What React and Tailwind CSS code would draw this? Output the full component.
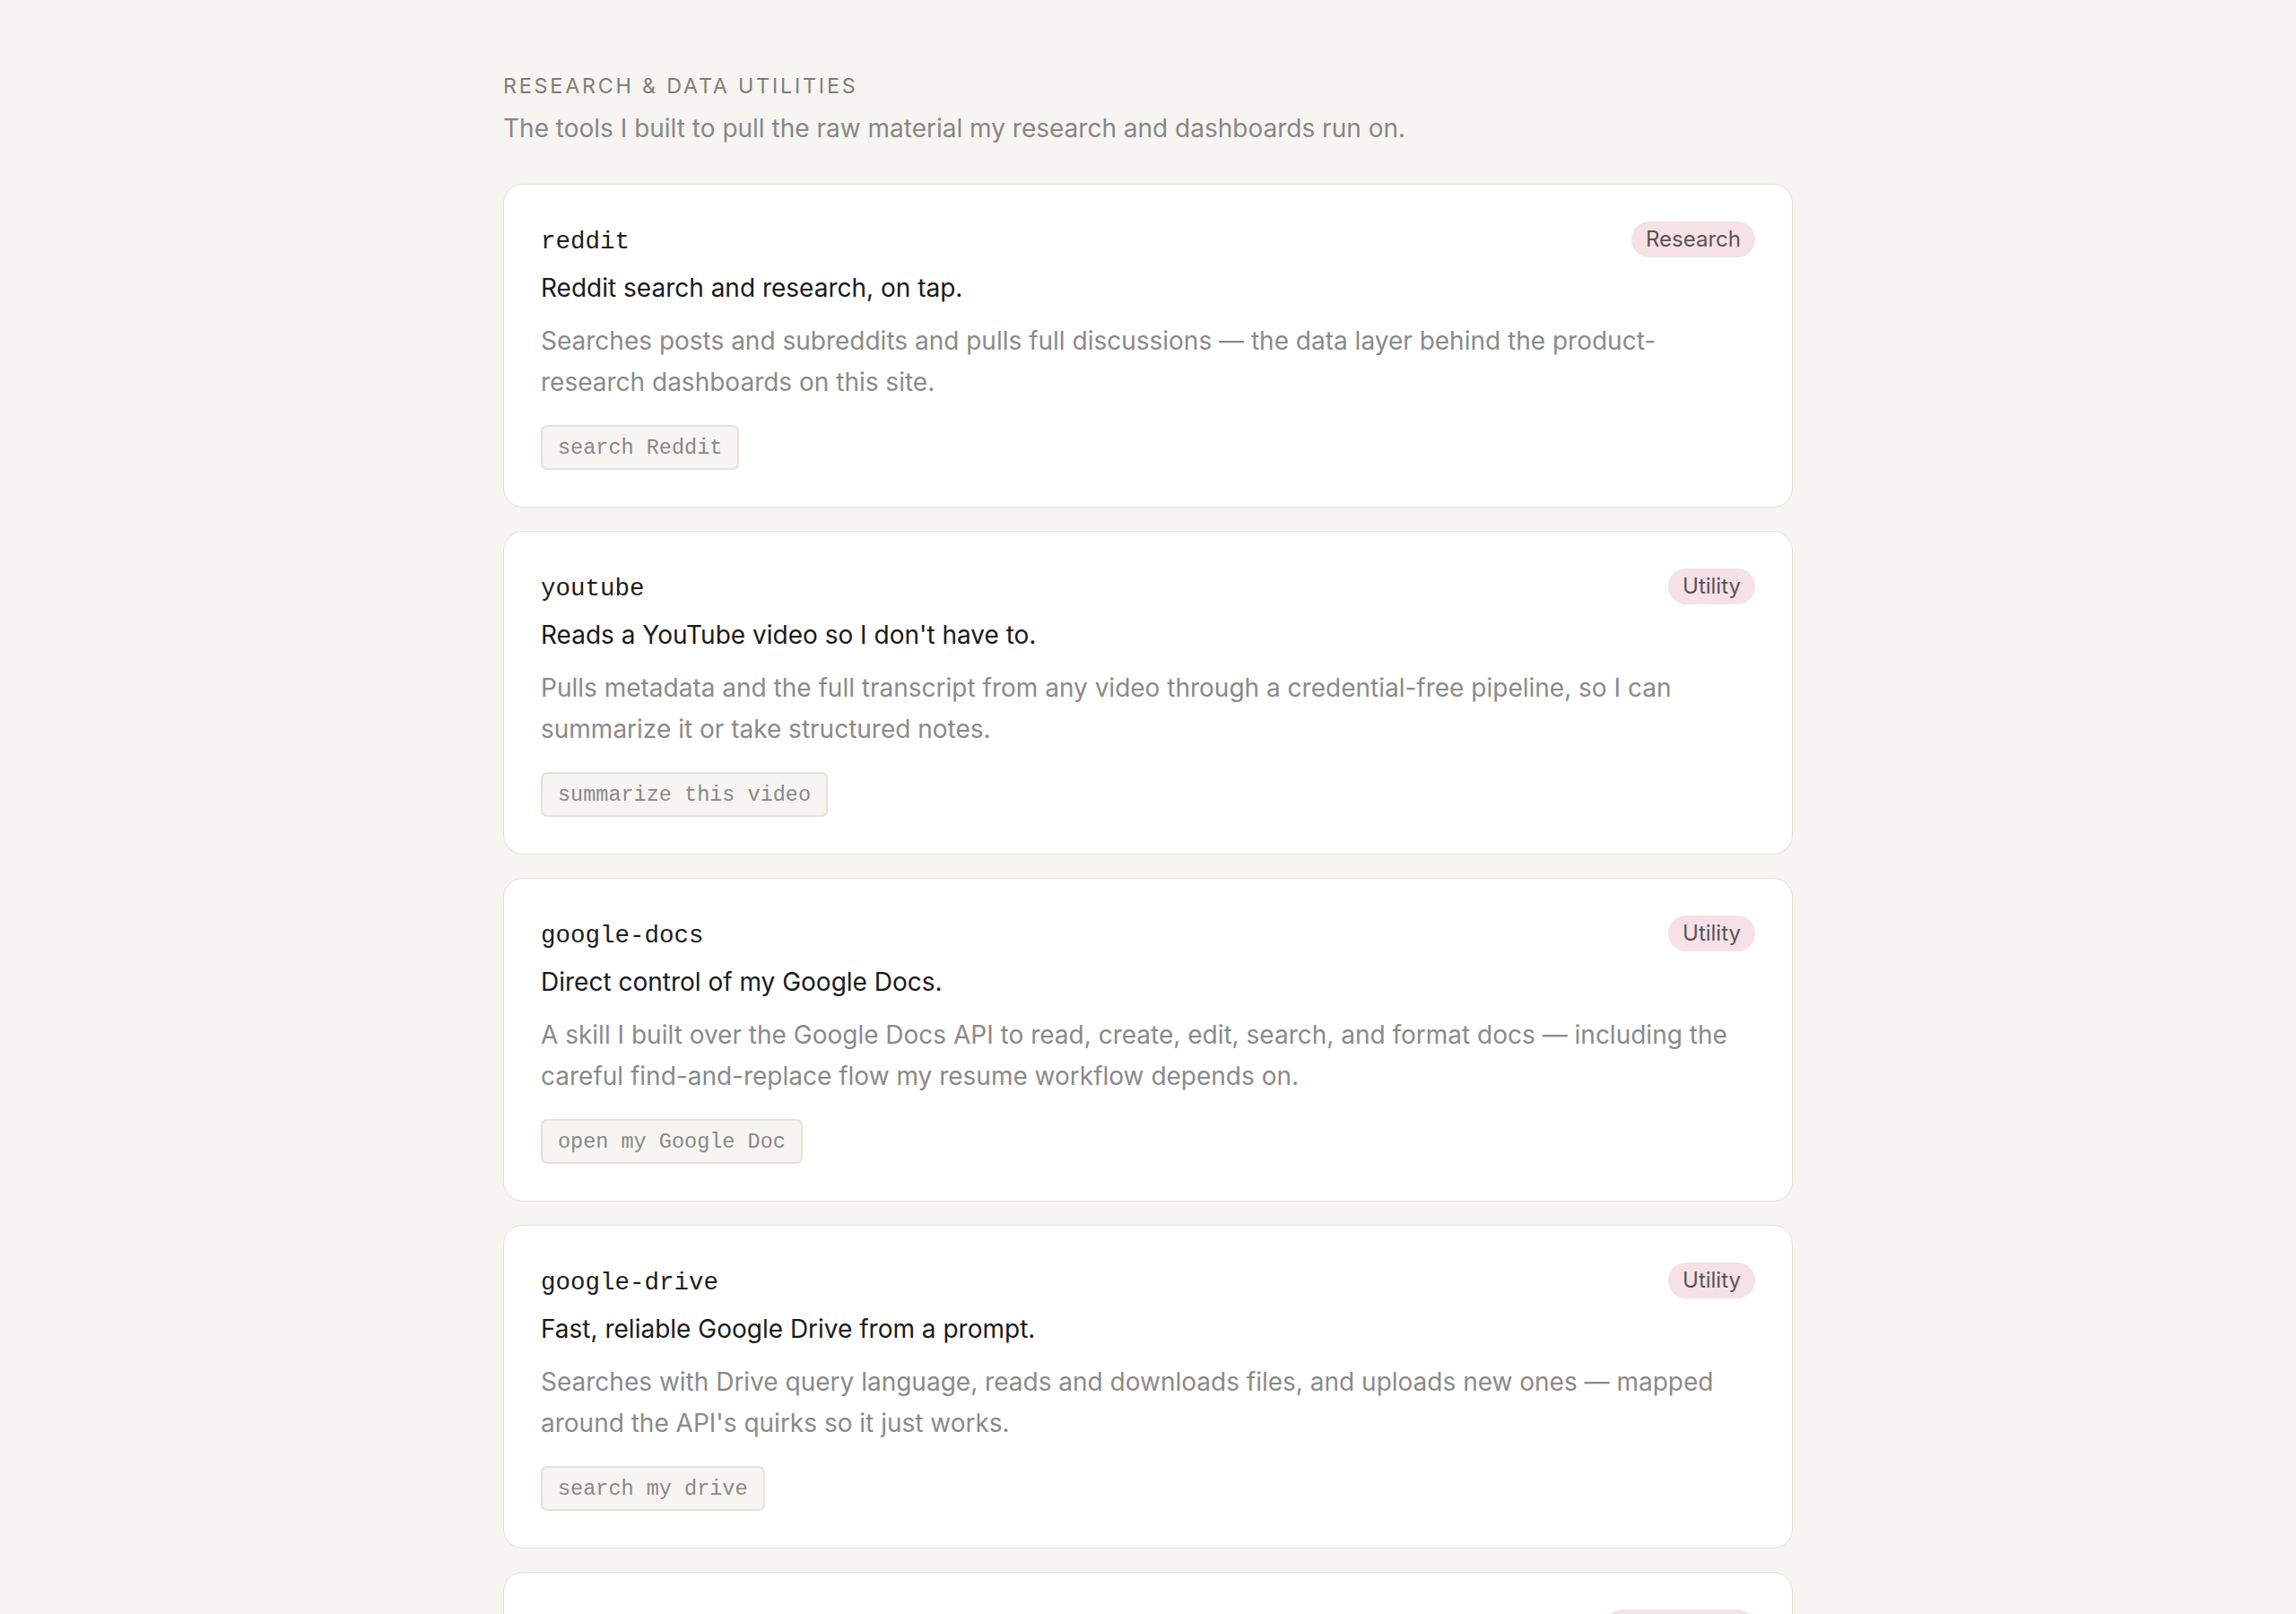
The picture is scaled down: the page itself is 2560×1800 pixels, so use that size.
import React from "react";

const tools = [
  {
    name: "reddit",
    tag: "Research",
    title: "Reddit search and research, on tap.",
    desc: "Searches posts and subreddits and pulls full discussions — the data layer behind the product-research dashboards on this site.",
    prompt: "search Reddit",
  },
  {
    name: "youtube",
    tag: "Utility",
    title: "Reads a YouTube video so I don't have to.",
    desc: "Pulls metadata and the full transcript from any video through a credential-free pipeline, so I can summarize it or take structured notes.",
    prompt: "summarize this video",
  },
  {
    name: "google-docs",
    tag: "Utility",
    title: "Direct control of my Google Docs.",
    desc: "A skill I built over the Google Docs API to read, create, edit, search, and format docs — including the careful find-and-replace flow my resume workflow depends on.",
    prompt: "open my Google Doc",
  },
  {
    name: "google-drive",
    tag: "Utility",
    title: "Fast, reliable Google Drive from a prompt.",
    desc: "Searches with Drive query language, reads and downloads files, and uploads new ones — mapped around the API's quirks so it just works.",
    prompt: "search my drive",
  },
  {
    name: "google-sheets",
    tag: "Dashboards",
    title: "Spreadsheets that fill themselves in.",
    desc: "Reads, writes, and formats ranges across my sheets so research output lands straight in the dashboards that use it.",
    prompt: "update my sheet",
  },
];

const mono = { fontFamily: '"Liberation Mono", "Courier New", monospace' };

const ToolCard = ({ tool }) => (
  <div className="bg-white border border-[#e4e0d7] rounded-[22px] px-[41px] pt-[41px] pb-[41px]">
    <div className="flex items-center justify-between h-[40px]">
      <span className="pt-[5px] text-[27.5px] leading-none text-[#1c1c1c]" style={mono}>
        {tool.name}
      </span>
      <span className="h-[40px] px-[16px] rounded-full bg-[#f5e1e6] text-[#5b5353] text-[24px] leading-[40px]">
        {tool.tag}
      </span>
    </div>
    <h3 className="mt-[14px] text-[28px] leading-[40px] text-[#1a1a1a]">{tool.title}</h3>
    <p className="mt-[16px] text-[28px] leading-[46px] text-[#8a8a8a]">{tool.desc}</p>
    <div className="mt-[25px]">
      <span
        className="inline-block h-[50px] px-[17px] leading-[48px] rounded-[7px] border-2 border-[#e6e1d8] bg-[#f6f5f1] text-[23.5px] text-[#888888]"
        style={mono}
      >
        {tool.prompt}
      </span>
    </div>
  </div>
);

export default function App() {
  return (
    <main
      className="min-h-screen bg-[#f6f5f1] overflow-hidden"
      style={{ fontFamily: 'Inter, "Noto Sans", sans-serif' }}
    >
      <div className="w-[1438px] mx-auto pt-[82px] h-[1800px]">
        <h2 className="text-[23.3px] leading-[28px] tracking-[0.12em] uppercase text-[#807d79]">
          Research &amp; Data Utilities
        </h2>
        <p className="mt-[15px] text-[28px] leading-[36px] text-[#878787]">
          The tools I built to pull the raw material my research and dashboards run on.
        </p>
        <div className="mt-[44px] flex flex-col gap-[26px]">
          {tools.map((tool) => (
            <ToolCard key={tool.name} tool={tool} />
          ))}
        </div>
      </div>
    </main>
  );
}
